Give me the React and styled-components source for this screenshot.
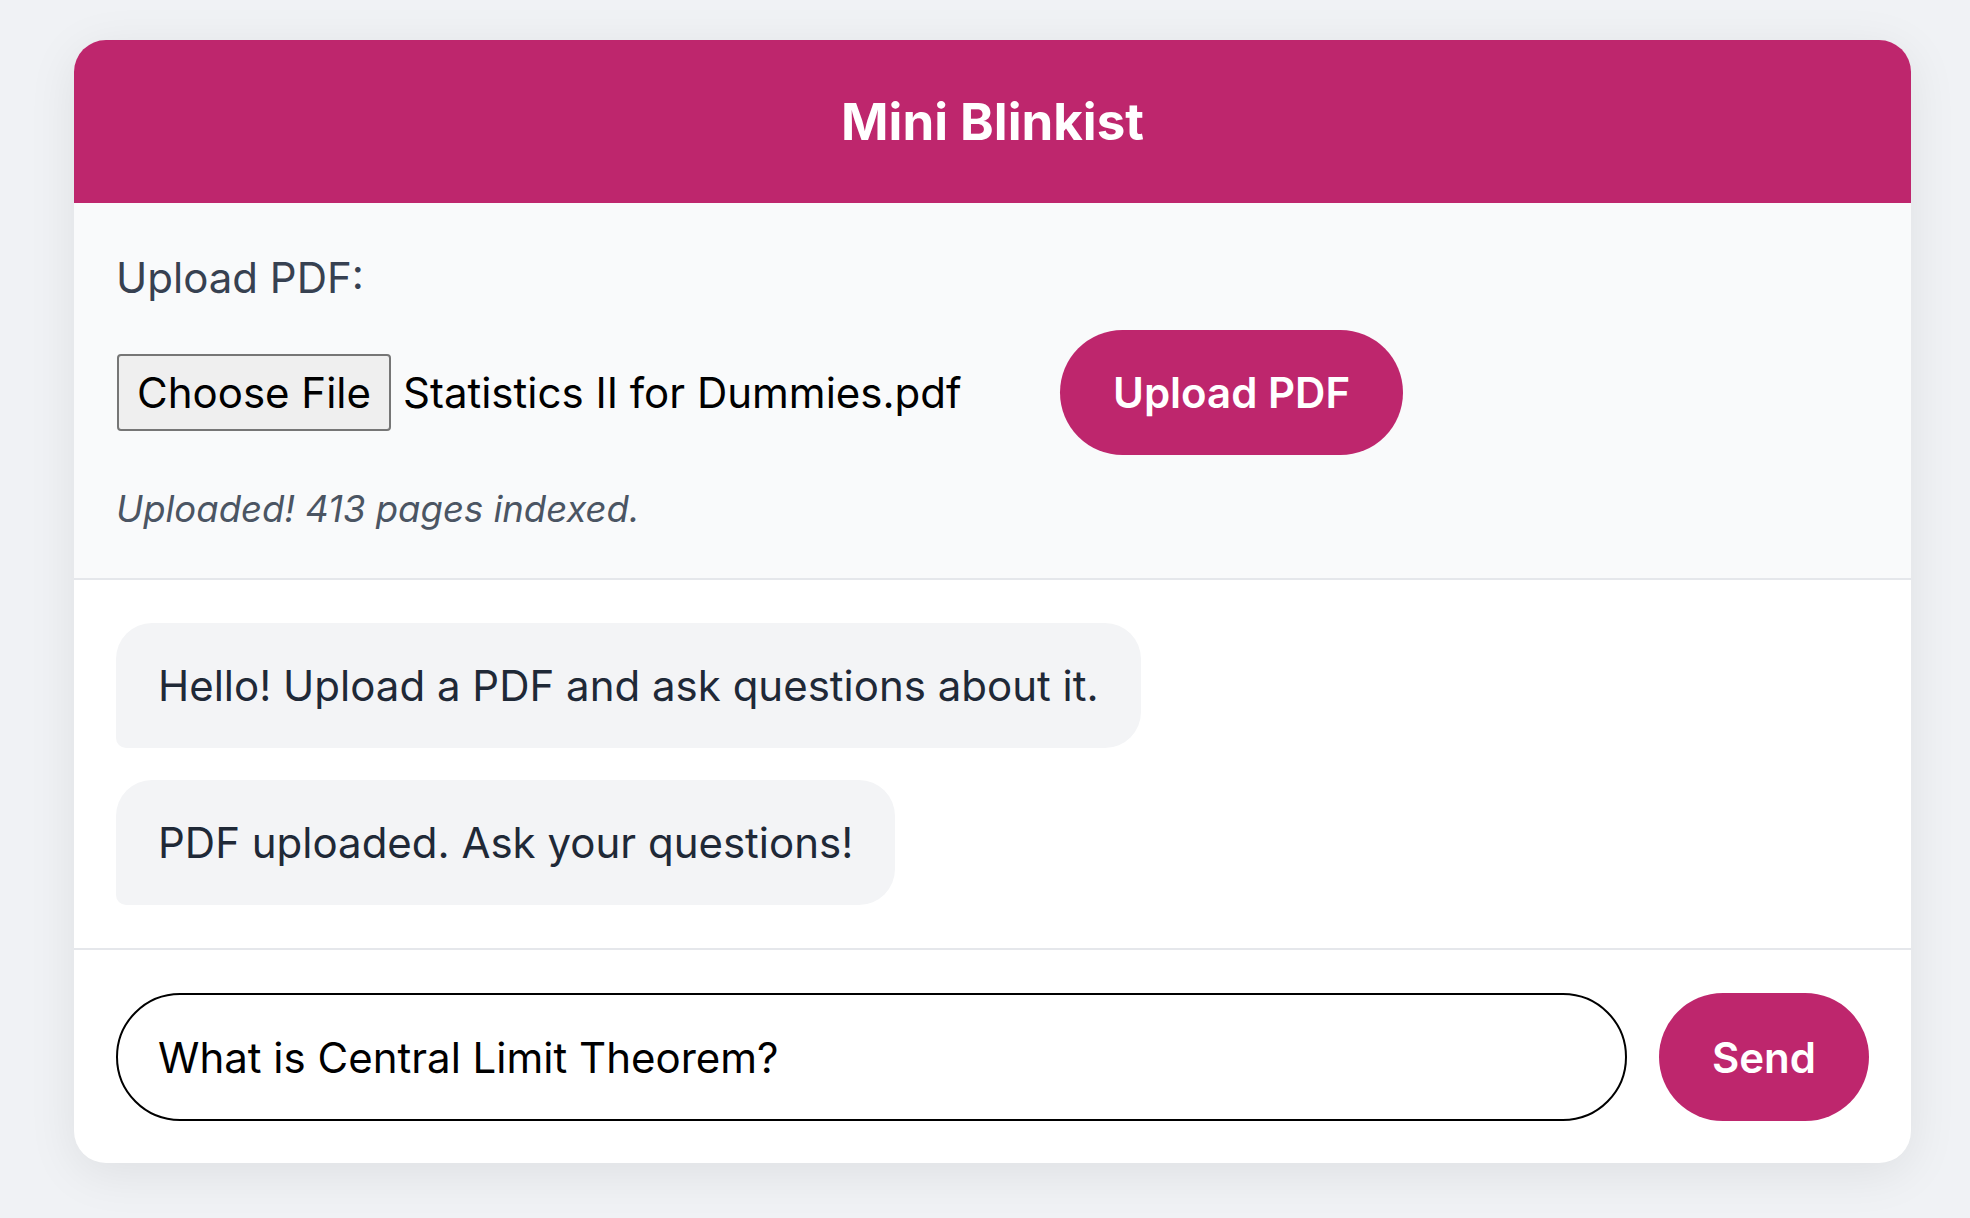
import React from "react";
import styled, { createGlobalStyle } from "styled-components";

const GlobalStyle = createGlobalStyle`
  html, body {
    margin: 0;
    padding: 0;
    background: #f0f2f5;
    font-family: Inter, "Noto Sans", "Liberation Sans", sans-serif;
  }
  * { box-sizing: border-box; }
`;

const Page = styled.div`
  min-height: 1218px;
  padding: 40px 0 0 74px;
`;

const Card = styled.div`
  width: 1837px;
  background: #ffffff;
  border-radius: 32px;
  overflow: hidden;
  box-shadow: 0 10px 50px rgba(0, 0, 0, 0.08);
`;

const Header = styled.header`
  height: 163px;
  background: #be266d;
  color: #ffffff;
  display: flex;
  align-items: center;
  justify-content: center;
`;

const Title = styled.h1`
  margin: 0;
  font-size: 51px;
  font-weight: 700;
  line-height: 60px;
`;

const UploadSection = styled.section`
  background: #f9fafb;
  padding: 51px 42px 47px;
  border-bottom: 2px solid #e5e7eb;
`;

const Label = styled.div`
  font-size: 42px;
  line-height: 48px;
  color: #374151;
`;

const UploadRow = styled.div`
  margin-top: 28px;
  display: flex;
  align-items: center;
  gap: 24px;
  padding-left: 1px;
`;

const FileField = styled.div`
  width: 919px;
  display: flex;
  align-items: center;
`;

const FileButton = styled.span`
  height: 77px;
  padding: 0 18px;
  display: inline-flex;
  align-items: center;
  border: 2px solid #767676;
  border-radius: 4px;
  background: #efefef;
  color: #000000;
  font-size: 42px;
  margin-right: 12px;
`;

const FileName = styled.span`
  font-size: 42px;
  color: #000000;
  white-space: nowrap;
`;

const PillButton = styled.button`
  height: ${(p) => (p.$stretch ? "auto" : "125px")};
  padding: 0 53px;
  border: none;
  border-radius: 999px;
  background: #be266d;
  color: #ffffff;
  font-family: inherit;
  font-size: 42px;
  font-weight: 600;
  cursor: pointer;
`;

const Status = styled.div`
  margin-top: 32px;
  font-size: 36.5px;
  line-height: 44px;
  font-style: italic;
  color: #4b5563;
`;

const ChatArea = styled.section`
  padding: 43px 42px;
  border-bottom: 2px solid #e5e7eb;
  display: flex;
  flex-direction: column;
  align-items: flex-start;
  gap: 32px;
`;

const Bubble = styled.div`
  background: #f3f4f6;
  color: #1f2937;
  font-size: 42px;
  line-height: 60px;
  padding: 33px 42px 32px;
  border-radius: 36px 36px 36px 10px;
`;

const InputRow = styled.form`
  padding: 43px 42px 42px;
  display: flex;
  align-items: stretch;
  gap: 32px;
`;

const TextInput = styled.input`
  flex: 1;
  height: 128px;
  padding: 0 40px;
  border: 2px solid #000000;
  border-radius: 999px;
  background: #ffffff;
  color: #000000;
  font-family: inherit;
  font-size: 42px;
  outline: none;
`;

export default function App() {
  return (
    <>
      <GlobalStyle />
      <Page>
        <Card>
          <Header>
            <Title>Mini Blinkist</Title>
          </Header>
          <UploadSection>
            <Label>Upload PDF:</Label>
            <UploadRow>
              <FileField>
                <FileButton>Choose File</FileButton>
                <FileName>Statistics II for Dummies.pdf</FileName>
              </FileField>
              <PillButton type="button">Upload PDF</PillButton>
            </UploadRow>
            <Status>Uploaded! 413 pages indexed.</Status>
          </UploadSection>
          <ChatArea>
            <Bubble>Hello! Upload a PDF and ask questions about it.</Bubble>
            <Bubble>PDF uploaded. Ask your questions!</Bubble>
          </ChatArea>
          <InputRow onSubmit={(e) => e.preventDefault()}>
            <TextInput defaultValue="What is Central Limit Theorem?" />
            <PillButton type="submit" $stretch>
              Send
            </PillButton>
          </InputRow>
        </Card>
      </Page>
    </>
  );
}
